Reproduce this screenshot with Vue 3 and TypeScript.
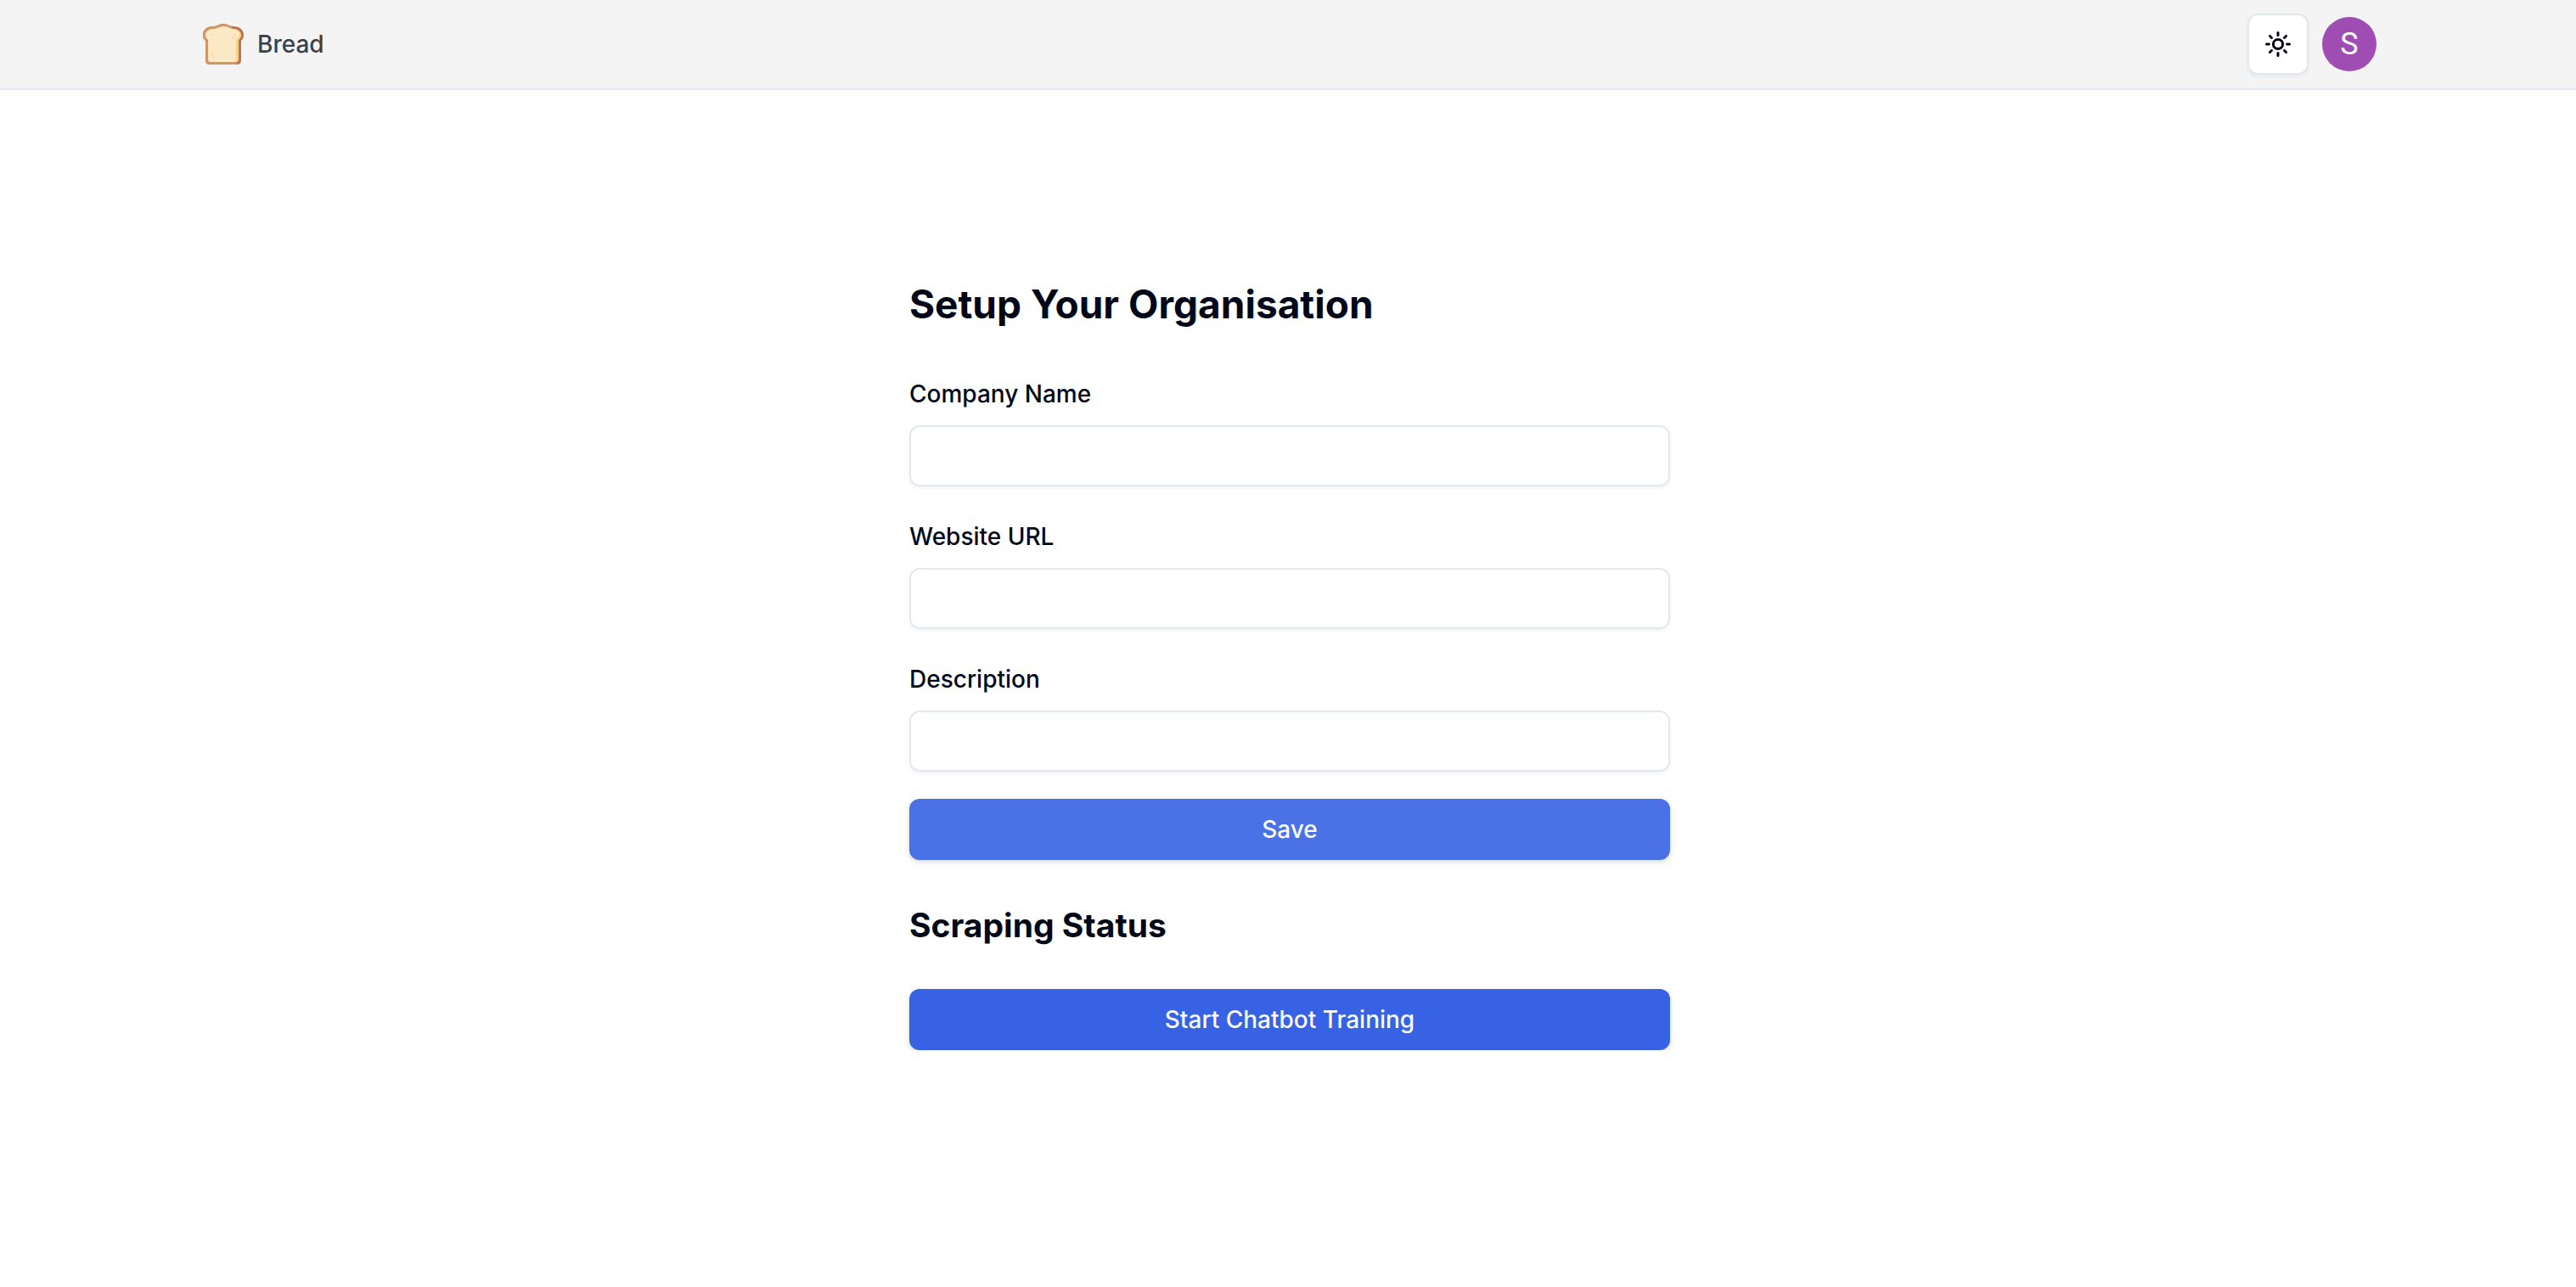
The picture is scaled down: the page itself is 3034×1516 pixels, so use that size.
<script setup lang="ts">
import { reactive } from 'vue'

interface Field {
  id: 'company' | 'website' | 'description'
  label: string
  type: string
}

const fields: Field[] = [
  { id: 'company', label: 'Company Name', type: 'text' },
  { id: 'website', label: 'Website URL', type: 'url' },
  { id: 'description', label: 'Description', type: 'text' },
]

const values = reactive({ company: '', website: '', description: '' })

const rays = [0, 45, 90, 135, 180, 225, 270, 315]
</script>

<template>
  <div class="page">
    <header class="topbar">
      <div class="topbar-inner">
        <a class="brand" href="#">
          <svg class="bread" viewBox="0 0 48 48" aria-hidden="true">
            <path fill="#bf7449" d="M24 0C29 0 31 3 36 3C43 3 48 7 48 13C48 16 47 18 45 20V43Q45 48 40 48H8Q3 48 3 43V20C1 18 0 16 0 13C0 7 5 3 12 3C17 3 19 0 24 0Z" />
            <path fill="#d29563" d="M24 0C28 0 30 2 34 3L41 44L39 48H8Q3 48 3 43V20C1 18 0 16 0 13C0 7 5 3 12 3C17 3 19 0 24 0Z" />
            <path fill="#f6d28d" d="M24 3C29 3 31 6 36 6C41 6 45 9 45 13C45 16 44 17 42 19V42Q42 45 39 45H30V3Z" />
            <path fill="#fbe8c5" d="M24 3C29 3 31 6 35 6C40 6 43 9 43 13C43 16 41 17 39 19V42Q39 45 36 45H9Q6 45 6 42V19C4 17 3 16 3 13C3 9 7 6 12 6C17 6 19 3 24 3Z" />
            <g fill="#f6d28d">
              <circle cx="10" cy="13" r="1" />
              <circle cx="38" cy="13" r="1" />
              <circle cx="35" cy="16" r="1" />
              <circle cx="10" cy="36" r="1" />
              <circle cx="13" cy="39" r="1" />
            </g>
          </svg>
          <span>Bread</span>
        </a>
        <div class="actions">
          <button class="theme" type="button" aria-label="Toggle theme">
            <svg viewBox="-15 -15 30 30" aria-hidden="true">
              <circle r="5.6" />
              <path v-for="angle in rays" :key="angle" d="M0 -13.5V-10.6" :transform="`rotate(${angle})`" />
            </svg>
          </button>
          <button class="avatar" type="button">S</button>
        </div>
      </div>
    </header>

    <main class="content">
      <h1>Setup Your Organisation</h1>
      <form class="form" @submit.prevent>
        <div class="fields">
          <div v-for="field in fields" :key="field.id" class="field">
            <label :for="field.id">{{ field.label }}</label>
            <input :id="field.id" v-model="values[field.id]" :type="field.type" />
          </div>
        </div>
        <button class="primary muted" type="submit">Save</button>
      </form>
      <h2>Scraping Status</h2>
      <button class="primary" type="button">Start Chatbot Training</button>
    </main>
  </div>
</template>

<style>
body {
  margin: 0;
  background: #fff;
}
</style>

<style scoped>
.page {
  color: #020817;
  font-family: Inter, "Liberation Sans", sans-serif;
  font-size: 28px;
  font-weight: 500;
  line-height: 30px;
}

.page * {
  box-sizing: border-box;
}

.topbar {
  padding: 16px 0 16px 4px;
  border-bottom: 2px solid #e2e8f0;
  background: #f4f4f4;
}

.topbar-inner {
  display: flex;
  align-items: center;
  justify-content: space-between;
  max-width: 2560px;
  margin: 0 auto;
}

.brand {
  display: flex;
  align-items: center;
  gap: 16px;
  color: #3f3f46;
  text-decoration: none;
}

.bread {
  width: 48px;
  height: 48px;
}

.actions {
  display: flex;
  align-items: center;
  gap: 16px;
}

button {
  padding: 0;
  border: 0;
  font: inherit;
  cursor: pointer;
}

.theme {
  display: grid;
  place-items: center;
  width: 72px;
  height: 72px;
  border: 2px solid #e2e8f0;
  border-radius: 12px;
  background: #fff;
  color: #020817;
  box-shadow: 0 2px 4px rgb(0 0 0 / 5%);
}

.theme svg {
  width: 30px;
  height: 30px;
  fill: none;
  stroke: currentColor;
  stroke-width: 3;
  stroke-linecap: round;
}

.avatar {
  width: 64px;
  height: 64px;
  border-radius: 50%;
  background: #9f4db3;
  color: #fff;
  font-family: Roboto, sans-serif;
  font-size: 36px;
  font-weight: 400;
}

.content {
  display: flex;
  flex-direction: column;
  max-width: 900px;
  margin: 0 auto;
  padding: 220px 0 0 4px;
}

h1,
h2 {
  margin: 0;
  font-weight: 700;
}

h1 {
  margin-bottom: 59px;
  font-size: 46px;
  line-height: 64px;
}

h2 {
  margin: 49px 0 47px;
  font-size: 39px;
  line-height: 56px;
}

.form {
  display: flex;
  flex-direction: column;
  gap: 32px;
}

.fields {
  display: flex;
  flex-direction: column;
  gap: 44px;
}

.field {
  display: flex;
  flex-direction: column;
  gap: 22px;
}

input {
  width: 100%;
  height: 72px;
  padding: 8px 24px;
  border: 2px solid #e2e8f0;
  border-radius: 12px;
  background: transparent;
  color: inherit;
  font: inherit;
  box-shadow: 0 2px 4px rgb(0 0 0 / 5%);
}

.primary {
  height: 72px;
  border-radius: 12px;
  background: #3662e3;
  color: #f8fafc;
  box-shadow: 0 2px 6px rgb(0 0 0 / 16%);
}

.muted {
  background: #4a72e6;
}
</style>
